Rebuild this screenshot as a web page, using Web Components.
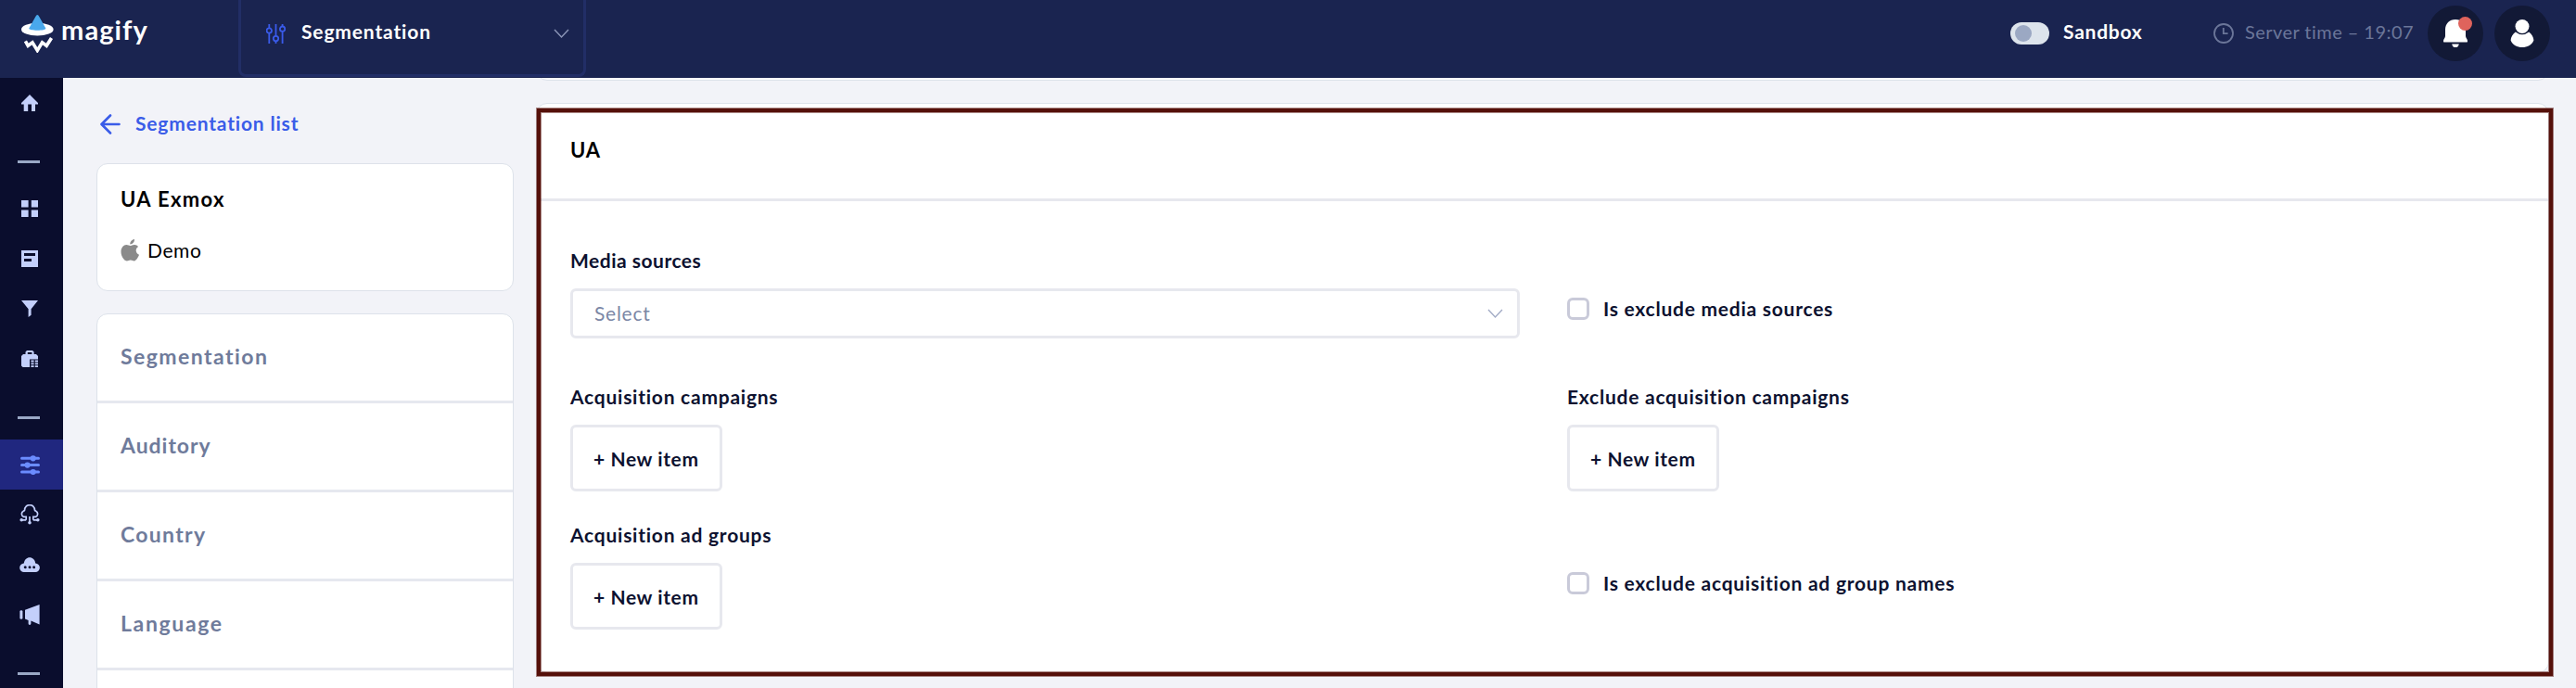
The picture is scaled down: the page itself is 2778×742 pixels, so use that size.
<!DOCTYPE html>
<html lang="en">
<head>
<meta charset="UTF-8">
<title>Magify</title>
<style>
  body {
    margin: 0;
    height: 742px;
    overflow: hidden;
    background: #f2f3f8;
    font-family: Lato, "Liberation Sans", sans-serif;
    font-size: 21px;
    line-height: 24px;
    color: #0d1230;
    font-variant-ligatures: none;
  }
</style>
</head>
<body>
<app-shell>
  <top-bar slot="header"></top-bar>
  <side-nav slot="nav"></side-nav>
  <segment-menu slot="menu"></segment-menu>
  <ui-panel heading="UA">
    <form-field label="Media sources" style="letter-spacing: .5px"><ui-select placeholder="Select"></ui-select></form-field>
    <ui-checkbox>Is exclude media sources</ui-checkbox>
    <form-field label="Acquisition campaigns"><ui-button>+ New item</ui-button></form-field>
    <form-field label="Exclude acquisition campaigns"><ui-button>+ New item</ui-button></form-field>
    <form-field label="Acquisition ad groups"><ui-button>+ New item</ui-button></form-field>
    <ui-checkbox>Is exclude acquisition ad group names</ui-checkbox>
  </ui-panel>
</app-shell>

<script>
const icons = {
  home: '<svg width="18" height="18"><path d="M9 0l9 9v1.4h-3V18h-4v-7.6H7.2V18H2.7v-7.6H0V9z"/></svg>',
  grid: '<svg width="18" height="18"><path d="M0 0h7.6v7.4H0zM10.8 0H18v7.4h-7.2zM0 10.6h7.6V18H0zM10.8 10.6H18V18h-7.2z"/></svg>',
  doc: '<svg width="18" height="18"><path fill-rule="evenodd" d="M0 0h18v18H0zM3 3v3h12V3zM3 9v3h8V9z"/></svg>',
  funnel: '<svg width="18" height="18"><path d="M0 0h18l-7.4 9.2v6.6L7.6 18V9.2z"/></svg>',
  bag: '<svg width="18" height="18"><path fill-rule="evenodd" d="M4.5 4V1.6L6 0h6l1.6 1.6V4H16l2 2v3.4H9V18H1.6L0 16.4V6l2-2zM6.8 4h4.6V2H6.8z"/><path d="M10.4 10.6h3.2v1.8h-3.2zM14.8 10.6H18v1.8h-3.2zM10.4 13.5h3.2v1.8h-3.2zM14.8 13.5H18v1.8h-3.2zM10.4 16.3h3.2V18h-3.2zM14.8 16.3H18V18h-3.2z"/></svg>',
  sliders: '<svg width="21" height="21"><path d="M1.5 3.3h18M1.5 10.6h18M1.5 18h18" fill="none" stroke="currentColor" stroke-width="3" stroke-linecap="round"/><circle cx="13.7" cy="3.3" r="3.1"/><circle cx="7.6" cy="10.6" r="3.1"/><circle cx="13.7" cy="18" r="3.1"/></svg>',
  tree: '<svg width="22" height="22"><path d="M7.2 16.8v-3.4H4.6a3.4 3.4 0 0 1-.4-6.2q1.2-.2 1.4-1.2a5.4 5.4 0 0 1 10.8 0q.2 1 1.4 1.2a3.4 3.4 0 0 1-.4 6.2h-2.6v3.4M7.2 16.8H2.6M14.8 16.8h4.6M11 13v6" fill="none" stroke="currentColor" stroke-width="1.7"/><circle cx="2.2" cy="16.8" r="1.8"/><circle cx="19.8" cy="16.8" r="1.8"/><circle cx="11" cy="19.8" r="1.8"/></svg>',
  cloud: '<svg width="22" height="16"><path fill-rule="evenodd" d="M5 16a4.7 4.7 0 0 1-.2-9.4C5.2 2.6 8 .2 11 .2s5.8 2.3 6.2 6.2A4.8 4.8 0 0 1 17 16zM6.2 9.3a1.5 1.5 0 1 0 .01 3a1.5 1.5 0 1 0 0-3zM11 9.3a1.5 1.5 0 1 0 .01 3a1.5 1.5 0 1 0 0-3zM15.6 9.3a1.5 1.5 0 1 0 .01 3a1.5 1.5 0 1 0 0-3z"/></svg>',
  megaphone: '<svg width="22" height="22"><rect x=".4" y="6.2" width="3" height="9.6" rx="1.4"/><path d="M6 5.8L21.6 0v21.4L12.4 17.6V20.6a1.4 1.4 0 0 1-2.8 0V17L6 15.6z"/></svg>',
  chevron: '<svg width="17" height="11"><path d="M1 1l7.5 8L16 1" fill="none" stroke="currentColor" stroke-width="1.4"/></svg>',
};

function define(name, html) {
  customElements.define(name, class extends HTMLElement {
    connectedCallback() {
      const root = this.attachShadow({ mode: 'open' });
      root.innerHTML = typeof html === 'function' ? html(this) : html;
    }
  });
}

define('app-shell', `
  <style>
    :host { display: grid; height: 742px; grid-template: 84px 658px / 68px 1fr; overflow: hidden; }
    .header { grid-column: 1 / 3; }
    main { display: flex; gap: 24px; padding: 0 29px 0 36px; min-width: 0; }
    .menu { flex: 0 0 450px; }
    .content { flex: 1; min-width: 0; }
    /* bottom edge of the card that is scrolled under the header */
    .previous { height: 3px; overflow: hidden; display: flex; align-items: flex-end; margin-bottom: 24px; }
    .previous div { flex: 1; height: 40px; box-sizing: border-box; background: #fff; border: 1px solid #dde2ea; border-radius: 12px; }
  </style>
  <div class="header"><slot name="header"></slot></div>
  <slot name="nav"></slot>
  <main>
    <div class="menu"><slot name="menu"></slot></div>
    <div class="content">
      <div class="previous"><div></div></div>
      <slot></slot>
    </div>
  </main>
`);

define('top-bar', `
  <style>
    :host { display: flex; height: 84px; background: #1a2450; color: #fff; }
    svg { display: block; flex: none; }
    .logo { width: 234px; padding-left: 23px; display: flex; align-items: flex-start; }
    .logo svg { margin-top: 15px; }
    .logo span { font-size: 29px; font-weight: 700; line-height: 34px; margin: 15px 0 0 7px; letter-spacing: 1.1px; }
    .section { width: 375px; height: 83px; box-sizing: border-box; display: flex; align-items: center; padding: 0 15px 8px 27px; border: 3px solid #222e66; border-top: 0; border-radius: 0 0 8px 8px; }
    .section span { flex: 1; margin-left: 17px; padding-bottom: 4px; font-weight: 700; letter-spacing: .85px; }
    .section .chevron { color: #8c96b8; }
    .right { margin-left: auto; height: 72px; padding-right: 28px; display: flex; align-items: center; }
    .toggle { width: 42px; height: 24px; box-sizing: border-box; padding: 3px 5px; border-radius: 12px; background: #dde4ec; }
    .toggle i { display: block; width: 18px; height: 18px; border-radius: 50%; background: #9ba8c3; }
    .sandbox { width: 85px; white-space: nowrap; margin: 0 77px 4px 15px; font-weight: 700; letter-spacing: .75px; }
    .time { width: 182px; white-space: nowrap; margin: 0 15px 4px 12px; font-size: 20px; letter-spacing: .45px; color: #6b7699; }
    .round { position: relative; width: 60px; height: 60px; border-radius: 50%; background: #121936; display: grid; place-items: center; }
    .round + .round { margin-left: 12px; }
    .dot { position: absolute; left: 33px; top: 12px; width: 15px; height: 15px; border-radius: 50%; background: #df635c; }
  </style>
  <div class="logo">
    <svg width="36" height="42" viewBox="23 15 36 42">
      <ellipse cx="40.3" cy="31.7" rx="17.3" ry="6.9" fill="#fff"/>
      <path d="M40.3 16q1 0 2 2l7 12.5c1 3-18.9 3-18 0l7-12.5q1-2 2-2z" fill="#49a8ec"/>
      <path d="M27.4 44.3l2.8 5 4.8-3.5 5.3 8.6 5.2-8.6 4.7 3.5 5.3-8.2" fill="none" stroke="#fff" stroke-width="3.6"/>
    </svg>
    <span>magify</span>
  </div>
  <div class="section">
    <svg width="21" height="21" fill="none" stroke="#3a5bea" stroke-width="1.8"><path d="M3.3 0v4M3.3 10v11M10.5 0v12.6M10.5 18.6v2.4M17.6 0v2.2M17.6 8.2v12.8"/><circle cx="3.3" cy="7" r="2.7"/><circle cx="10.5" cy="15.6" r="2.7"/><circle cx="17.6" cy="5.2" r="2.7"/></svg>
    <span>Segmentation</span>
    <div class="chevron">${icons.chevron}</div>
  </div>
  <div class="right">
    <div class="toggle"><i></i></div>
    <div class="sandbox">Sandbox</div>
    <svg width="22" height="22" fill="none" stroke="#6b7699" stroke-width="1.8"><circle cx="11" cy="11" r="10"/><path d="M10.8 5v6.2h4.8"/></svg>
    <div class="time">Server time – 19:07</div>
    <div class="round">
      <svg width="26" height="30" fill="#fff"><path d="M13 0c6.5 0 11 4.5 11 11v7c0 2 2 3 2 5v.4q0 1.2-1.2 1.2H1.2Q0 24.6 0 23.4V23c0-2 2-3 2-5v-7C2 4.5 6.5 0 13 0zM9.2 26.4h7.6q-.6 3.6-3.8 3.6t-3.8-3.6z"/></svg>
      <i class="dot"></i>
    </div>
    <div class="round">
      <svg width="26" height="30" fill="#fff"><circle cx="13" cy="7.5" r="7.5"/><path d="M5.8 13.5q7.2 5.6 14.4 0C23 15.6 25.4 19 25.4 22.5 23 28 18.5 30 13 30S3 28 .6 22.5C.6 19 3 15.6 5.8 13.5z"/></svg>
    </div>
  </div>
`);

define('side-nav', () => {
  const groups = [['home'], ['grid', 'doc', 'funnel', 'bag'], ['sliders', 'tree', 'cloud', 'megaphone']];
  const items = groups.map(group => group.map(name =>
    `<a class="${name === 'sliders' ? 'active' : ''}">${icons[name]}</a>`).join('') + '<hr>').join('');
  return `
    <style>
      :host { display: block; background: #0a0d2d; color: #c3cffb; overflow: hidden; }
      a { display: flex; height: 54px; padding-right: 4px; align-items: center; justify-content: center; }
      svg { display: block; fill: currentColor; }
      .active { background: #20277f; color: #6b8cff; }
      hr { width: 24px; height: 3px; margin: 35px 0 22px 19px; border: 0; background: #9aa8c6; }
    </style>
    ${items}
  `;
});

define('segment-menu', () => {
  const sections = [['Segmentation', 1.45], ['Auditory', .95], ['Country', 1.3], ['Language', 1.65], ['', 0]];
  return `
    <style>
      :host { display: block; }
      svg { display: block; }
      .back { display: flex; align-items: center; height: 24px; padding: 38px 0 30px 4px; color: #3a5ce8; font-weight: 700; letter-spacing: .82px; }
      .back span { margin-left: 16px; padding-bottom: 3px; }
      .card { box-sizing: border-box; background: #fff; border: 1px solid #dde2ea; border-radius: 12px; }
      .app { height: 138px; padding: 24px 25px; margin-bottom: 24px; color: #000; }
      h2 { margin: 0 0 30px; font-size: 22px; line-height: 27px; font-weight: 700; letter-spacing: 1.35px; }
      .app div { display: flex; align-items: center; gap: 8px; letter-spacing: .6px; }
      .item { height: 96px; padding: 0 25px 4px; box-sizing: border-box; display: flex; align-items: center; border-bottom: 3px solid #e6e8ef; font-size: 23px; font-weight: 700; color: #6f7b9b; }
    </style>
    <div class="back">
      <svg width="22" height="22" fill="none" stroke="currentColor" stroke-width="2.6" stroke-linecap="round" stroke-linejoin="round"><path d="M11 1.5L1.5 11l9.5 9.5M2 11h18.5"/></svg>
      <span>Segmentation list</span>
    </div>
    <div class="card app">
      <h2>UA Exmox</h2>
      <div>
        <svg width="21" height="24" fill="#8a8a8a"><path d="M15 0c.3 2.8-2 5.4-4.7 5.5C10 2.8 12.4.3 15 0zM10.500 7C11.500 7 13 5.800 15.200 5.900c1.500 0 3 .8 3.900 2.200-3.600 2.200-3 7.200.9 8.700-.8 2.400-3 6.500-5.200 6.600-1.500 0-2-1-4-1s-2.600 1-4 1C3.500 23.400.5 18 .5 13.600.5 9 3.400 6.200 6.200 6.100 8 6.100 9.500 7 10.500 7z"/></svg>
        Demo
      </div>
    </div>
    <div class="card">
      ${sections.map(([name, spacing]) => `<div class="item" style="letter-spacing:${spacing}px">${name}</div>`).join('')}
    </div>
  `;
});

define('ui-panel', el => `
  <style>
    :host { display: block; position: relative; box-sizing: border-box; height: 615px; background: #fff; border: 1px solid #dde2ea; border-radius: 12px; letter-spacing: .75px; }
    header { height: 102px; padding: 0 36px; display: flex; align-items: center; border-bottom: 3px solid #e7e8ee; }
    h1 { margin: 0 0 3px; font-size: 22px; line-height: 27px; font-weight: 700; color: #000; }
    .body { display: grid; grid-template-columns: 1024px 1fr; grid-template-rows: 147px 149px 114px; column-gap: 51px; padding: 52px 36px 0; }
    .highlight { position: absolute; left: 0; top: 5px; right: -5px; bottom: -4px; border: 4px solid #55100a; box-shadow: 0 0 0 1px rgba(85, 16, 10, .5), inset 0 0 0 1px rgba(85, 16, 10, .5); pointer-events: none; }
  </style>
  <header><h1>${el.getAttribute('heading')}</h1></header>
  <div class="body"><slot></slot></div>
  <div class="highlight"></div>
`);

define('form-field', el => `
  <style>
    :host { display: block; }
    label { display: block; height: 24px; margin-bottom: 18px; font-weight: 700; }
  </style>
  <label>${el.getAttribute('label')}</label>
  <slot></slot>
`);

define('ui-select', el => `
  <style>
    :host { display: flex; align-items: center; justify-content: space-between; height: 54px; box-sizing: border-box; padding: 0 15px 0 23px; border: 3px solid #e7e8ee; border-radius: 6px; color: #7c87a6; letter-spacing: .75px; }
    svg { display: block; color: #a3acc6; }
  </style>
  <span>${el.getAttribute('placeholder')}</span>
  ${icons.chevron}
`);

define('ui-button', `
  <style>
    :host { display: flex; align-items: center; width: 164px; height: 72px; box-sizing: border-box; padding: 1px 0 0 22px; border: 3px solid #e7e8ee; border-radius: 6px; font-weight: 700; letter-spacing: .6px; white-space: nowrap; }
  </style>
  <slot></slot>
`);

define('ui-checkbox', `
  <style>
    :host { display: flex; align-items: center; height: 24px; margin-top: 52px; font-weight: 700; }
    i { width: 24px; height: 24px; box-sizing: border-box; margin-right: 15px; border: 3px solid #c9cad9; border-radius: 6px; }
  </style>
  <i></i><slot></slot>
`);
</script>
</body>
</html>
